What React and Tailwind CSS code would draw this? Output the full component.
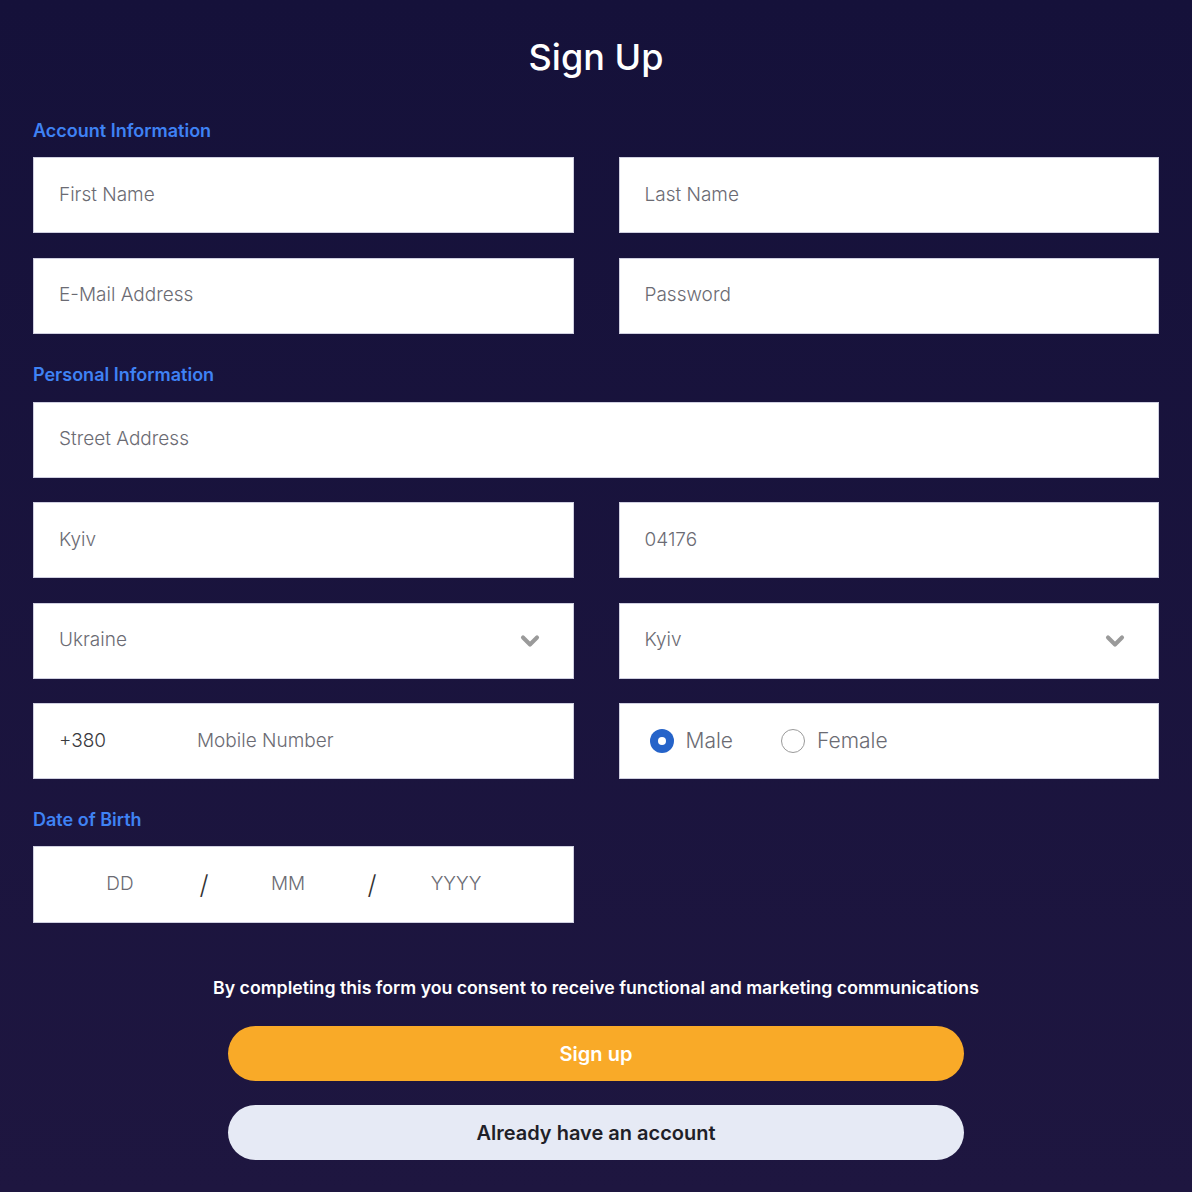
import { ChevronDown } from "lucide-react";

const font = { fontFamily: "Inter, 'Noto Sans', sans-serif" };

const inputBox =
  "h-[76px] bg-white border border-[#cfcfe0] flex items-center px-[25px] text-[19px] font-light text-[#6b6b73]";

const Label = ({ children, className = "" }) => (
  <h3 className={`text-[18px] font-semibold text-[#3f82f4] ${className}`}>{children}</h3>
);

const Field = ({ children, dark, className = "" }) => (
  <div className={`${inputBox} ${dark ? "text-[#3a3a40]" : ""} ${className}`}>{children}</div>
);

const Select = ({ value }) => (
  <div className={`${inputBox} justify-between text-[#3a3a40]`}>
    <span>{value}</span>
    <ChevronDown className="w-7 h-7 mr-[4px] text-[#9a9a9a]" strokeWidth={3.5} />
  </div>
);

export default function App() {
  return (
    <div
      style={font}
      className="min-h-[1192px] bg-gradient-to-b from-[#15113a] to-[#1e1640] px-[33px] pt-[34px]"
    >
      <h1 className="text-center text-white text-[36px] font-medium leading-[46px]">Sign Up</h1>

      <Label className="mt-[39px] leading-[24px]">Account Information</Label>
      <div className="mt-[14px] grid grid-cols-2 gap-x-[45px] gap-y-[24.5px]">
        <Field>First Name</Field>
        <Field>Last Name</Field>
        <Field>E-Mail Address</Field>
        <Field>Password</Field>
      </div>

      <Label className="mt-[29px] leading-[24px]">Personal Information</Label>
      <div className="mt-[15px] grid grid-cols-2 gap-x-[45px] gap-y-[24.5px]">
        <Field className="col-span-2">Street Address</Field>
        <Field dark>Kyiv</Field>
        <Field dark>04176</Field>
        <Select value="Ukraine" />
        <Select value="Kyiv" />
        <Field>
          <span className="text-[#3a3a40] w-[138px]">+380</span>
          <span>Mobile Number</span>
        </Field>
        <div className={`${inputBox} pl-[30px] text-[#3a3a40] text-[21px]`}>
          <span className="w-[24px] h-[24px] rounded-full bg-[#2563c9] flex items-center justify-center">
            <span className="w-[8px] h-[8px] rounded-full bg-white" />
          </span>
          <span className="ml-[12px]">Male</span>
          <span className="ml-[48px] w-[24px] h-[24px] rounded-full border border-[#9a9a9a]" />
          <span className="ml-[12px]">Female</span>
        </div>
      </div>

      <Label className="mt-[29px] leading-[24px]">Date of Birth</Label>
      <div className="mt-[14px] grid grid-cols-2 gap-x-[45px]">
        <div className={`${inputBox} h-[77px] pl-[44px] pr-0`}>
          <span className="w-[84px] text-center">DD</span>
          <span className="w-[84px] text-center text-[26px] text-[#333]">/</span>
          <span className="w-[84px] text-center">MM</span>
          <span className="w-[84px] text-center text-[26px] text-[#333]">/</span>
          <span className="w-[84px] text-center">YYYY</span>
        </div>
      </div>

      <p className="mt-[53px] text-center text-white text-[17.7px] font-semibold leading-[24px]">
        By completing this form you consent to receive functional and marketing communications
      </p>

      <div className="mt-[26px] flex flex-col items-center gap-[24px]">
        <button className="w-[736px] h-[55px] rounded-full bg-[#f9aa28] text-white text-[20px] font-semibold">
          Sign up
        </button>
        <button className="w-[736px] h-[55px] rounded-full bg-[#e6eaf5] text-[#1f1f28] text-[20px] font-semibold">
          Already have an account
        </button>
      </div>
    </div>
  );
}
